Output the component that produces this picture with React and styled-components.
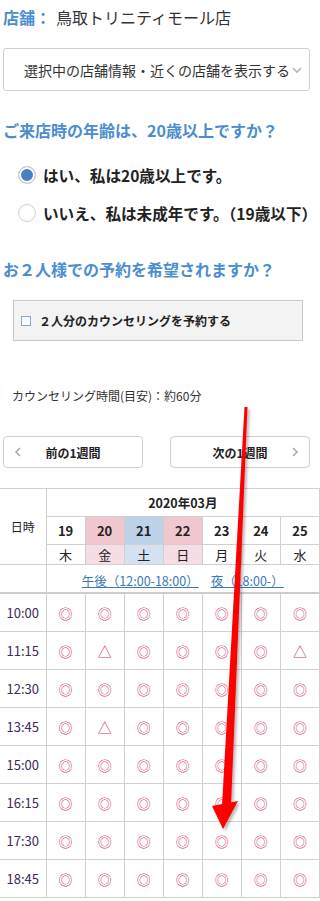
import React from "react";
import styled, { createGlobalStyle } from "styled-components";

const Global = createGlobalStyle`
  html, body { margin: 0; padding: 0; background: #fff; }
  body {
    font-family: "Noto Sans CJK JP", "Noto Sans", sans-serif;
    color: #333;
    width: 320px;
    overflow: hidden;
  }
`;

const Page = styled.div`
  position: relative;
  width: 320px;
  height: 901px;
  overflow: hidden;
  display: flex;
  flex-direction: column;
`;

const StoreLine = styled.div`
  margin: 5px 0 0 3px;
  font-size: 16px;
  line-height: 24px;
  white-space: nowrap;
  color: #333;
`;

const Label = styled.span`
  color: #4b8dd0;
  font-weight: bold;
  margin-right: 5px;
`;

const Select = styled.div`
  margin: 19px 0 0 3px;
  width: 307px;
  height: 43px;
  box-sizing: border-box;
  border: 1px solid #cfcfcf;
  border-radius: 3px;
  display: flex;
  align-items: center;
  padding-left: 20px;
  font-size: 14px;
  color: #333;
  white-space: nowrap;
  gap: 1px;
`;

const Question = styled.h2`
  margin: ${(p) => p.$mt}px 0 0 3px;
  font-size: 16px;
  line-height: 24px;
  font-weight: bold;
  color: #4b8dd0;
  white-space: nowrap;
`;

const RadioRow = styled.label`
  display: flex;
  align-items: center;
  gap: 7px;
  margin: ${(p) => p.$mt}px 0 0 18px;
  height: 30px;
  font-size: 15.6px;
  font-weight: bold;
  color: #222;
  white-space: nowrap;
`;

const RadioDot = styled.span`
  width: 18px;
  height: 18px;
  box-sizing: border-box;
  border-radius: 50%;
  border: 1px solid #d0d0d0;
  background: ${(p) => (p.$on ? "#4a7fc0" : "#fff")};
  box-shadow: ${(p) => (p.$on ? "inset 0 0 0 2px #fff" : "none")};
  flex: none;
`;

const CheckBox = styled.div`
  margin: 19px 0 0 13px;
  width: 290px;
  height: 41px;
  box-sizing: border-box;
  background: #f3f3f3;
  border: 1px solid #c8c8c8;
  display: flex;
  align-items: center;
  padding-left: 7px;
  gap: 8px;
  font-size: 12px;
  font-weight: bold;
  color: #222;
  white-space: nowrap;
`;

const Square = styled.span`
  width: 8px;
  height: 8px;
  border: 1px solid #7aa6d8;
  background: #fff;
  flex: none;
`;

const Note = styled.div`
  margin: 46px 0 0 12px;
  font-size: 12px;
  line-height: 18px;
  color: #333;
`;

const WeekNav = styled.div`
  margin: 31px 0 0 3px;
  width: 307px;
  display: flex;
  justify-content: space-between;
`;

const WeekButton = styled.button`
  width: 140px;
  height: 32px;
  box-sizing: border-box;
  border: 1px solid #cfcfcf;
  border-radius: 4px;
  background: #fff;
  display: flex;
  align-items: center;
  justify-content: space-between;
  padding: 0 8px;
  font-family: inherit;
  font-size: 12px;
  font-weight: bold;
  color: #222;
`;

const ButtonText = styled.span`
  flex: 1;
  text-align: center;
`;

const Spacer = styled.span`
  width: 12px;
  flex: none;
`;

const Table = styled.table`
  margin-top: 20px;
  width: 320px;
  border-collapse: collapse;
  table-layout: fixed;
  border-top: 1px solid #d0d0d0;
  td, th {
    border: 1px solid #d0d0d0;
    padding: 0;
    text-align: center;
  }
  tr > *:first-child { border-left: none; }
`;

const MonthCell = styled.th`
  height: 27px;
  font-size: 12.5px;
  font-weight: bold;
  color: #222;
`;

const CornerCell = styled.th`
  font-size: 12px;
  font-weight: normal;
  color: #222;
`;

const dateBg = { sat: "#bdd1e8", hol: "#f0c6cf" };
const dowBg = { sat: "#d3e1f2", hol: "#f5dce5" };

const DateCell = styled.td`
  height: 27px;
  font-size: 13px;
  font-weight: bold;
  color: #222;
  background: ${(p) => dateBg[p.$kind] || "#fff"};
`;

const DowCell = styled.td`
  height: 19px;
  font-size: 13px;
  color: #222;
  background: ${(p) => dowBg[p.$kind] || "#fff"};
`;

const LinkRow = styled.tr`
  td { height: 27px; border-bottom: 2px solid #cccccc; }
`;

const SlotLink = styled.a`
  font-size: 12.5px;
  color: #3a78b5;
  text-decoration: underline;
  margin: 0 6px;
  white-space: nowrap;
`;

const TimeCell = styled.td`
  height: 37px;
  font-size: 13px;
  color: #402a55;
`;

const Mark = styled.td`
  font-size: 14px;
  color: #d2386a;
`;

const Arrow = styled.svg`
  position: absolute;
  left: 0;
  top: 0;
  pointer-events: none;
`;

const Chevron = ({ dir = "down", color = "#aaa", size = 12 }) => {
  const d =
    dir === "down"
      ? "M2 4 L6 8 L10 4"
      : dir === "left"
      ? "M8 2 L4 6 L8 10"
      : "M4 2 L8 6 L4 10";
  return (
    <svg width={size} height={size} viewBox="0 0 12 12">
      <path d={d} fill="none" stroke={color} strokeWidth="1.6" />
    </svg>
  );
};

const days = [
  ["19", "木", ""],
  ["20", "金", "hol"],
  ["21", "土", "sat"],
  ["22", "日", "hol"],
  ["23", "月", ""],
  ["24", "火", ""],
  ["25", "水", ""],
];

const slots = [
  ["10:00", "◎◎◎◎◎◎◎"],
  ["11:15", "◎△◎◎◎◎△"],
  ["12:30", "◎◎◎◎◎◎◎"],
  ["13:45", "◎△◎◎◎◎◎"],
  ["15:00", "◎◎◎◎◎◎◎"],
  ["16:15", "◎◎◎◎◎◎◎"],
  ["17:30", "◎◎◎◎◎◎◎"],
  ["18:45", "◎◎◎◎◎◎◎"],
];

export default function App() {
  return (
    <Page>
      <Global />
      <StoreLine>
        <Label>店舗：</Label>鳥取トリニティモール店
      </StoreLine>
      <Select>
        選択中の店舗情報・近くの店舗を表示する
        <Chevron dir="down" color="#b5b5b5" />
      </Select>
      <Question $mt={27}>ご来店時の年齢は、20歳以上ですか？</Question>
      <RadioRow $mt={18}>
        <RadioDot $on />
        はい、私は20歳以上です。
      </RadioRow>
      <RadioRow $mt={8}>
        <RadioDot />
        いいえ、私は未成年です。（19歳以下）
      </RadioRow>
      <Question $mt={29}>お２人様での予約を希望されますか？</Question>
      <CheckBox>
        <Square />
        ２人分のカウンセリングを予約する
      </CheckBox>
      <Note>カウンセリング時間(目安)：約60分</Note>
      <WeekNav>
        <WeekButton>
          <Chevron dir="left" color="#aaa" />
          <ButtonText>前の1週間</ButtonText>
          <Spacer />
        </WeekButton>
        <WeekButton>
          <Spacer />
          <ButtonText>次の1週間</ButtonText>
          <Chevron dir="right" color="#aaa" />
        </WeekButton>
      </WeekNav>
      <Table>
        <colgroup>
          <col style={{ width: 46 }} />
          {days.map((d) => (
            <col key={d[0]} style={{ width: 39 }} />
          ))}
        </colgroup>
        <tbody>
          <tr>
            <CornerCell rowSpan={3}>日時</CornerCell>
            <MonthCell colSpan={7}>2020年03月</MonthCell>
          </tr>
          <tr>
            {days.map(([d, , k]) => (
              <DateCell key={d} $kind={k}>
                {d}
              </DateCell>
            ))}
          </tr>
          <tr>
            {days.map(([d, w, k]) => (
              <DowCell key={d} $kind={k}>
                {w}
              </DowCell>
            ))}
          </tr>
          <LinkRow>
            <td />
            <td colSpan={7}>
              <SlotLink href="#">午後（12:00-18:00）</SlotLink>
              <SlotLink href="#">夜（18:00-）</SlotLink>
            </td>
          </LinkRow>
          {slots.map(([t, marks]) => (
            <tr key={t}>
              <TimeCell>{t}</TimeCell>
              {[...marks].map((m, i) => (
                <Mark key={i}>{m}</Mark>
              ))}
            </tr>
          ))}
        </tbody>
      </Table>
      <Arrow width="320" height="901" viewBox="0 0 320 901">
        <defs>
          <filter id="sh" x="-50%" y="-10%" width="200%" height="120%">
            <feDropShadow dx="2" dy="2" stdDeviation="1.5" floodColor="#000" floodOpacity="0.3" />
          </filter>
        </defs>
        <g filter="url(#sh)" fill="#ff0000">
          <polygon points="244.5,407 247.5,407 231,806 222,806" />
          <polygon points="212,806 238,801 223,829" />
        </g>
      </Arrow>
    </Page>
  );
}
